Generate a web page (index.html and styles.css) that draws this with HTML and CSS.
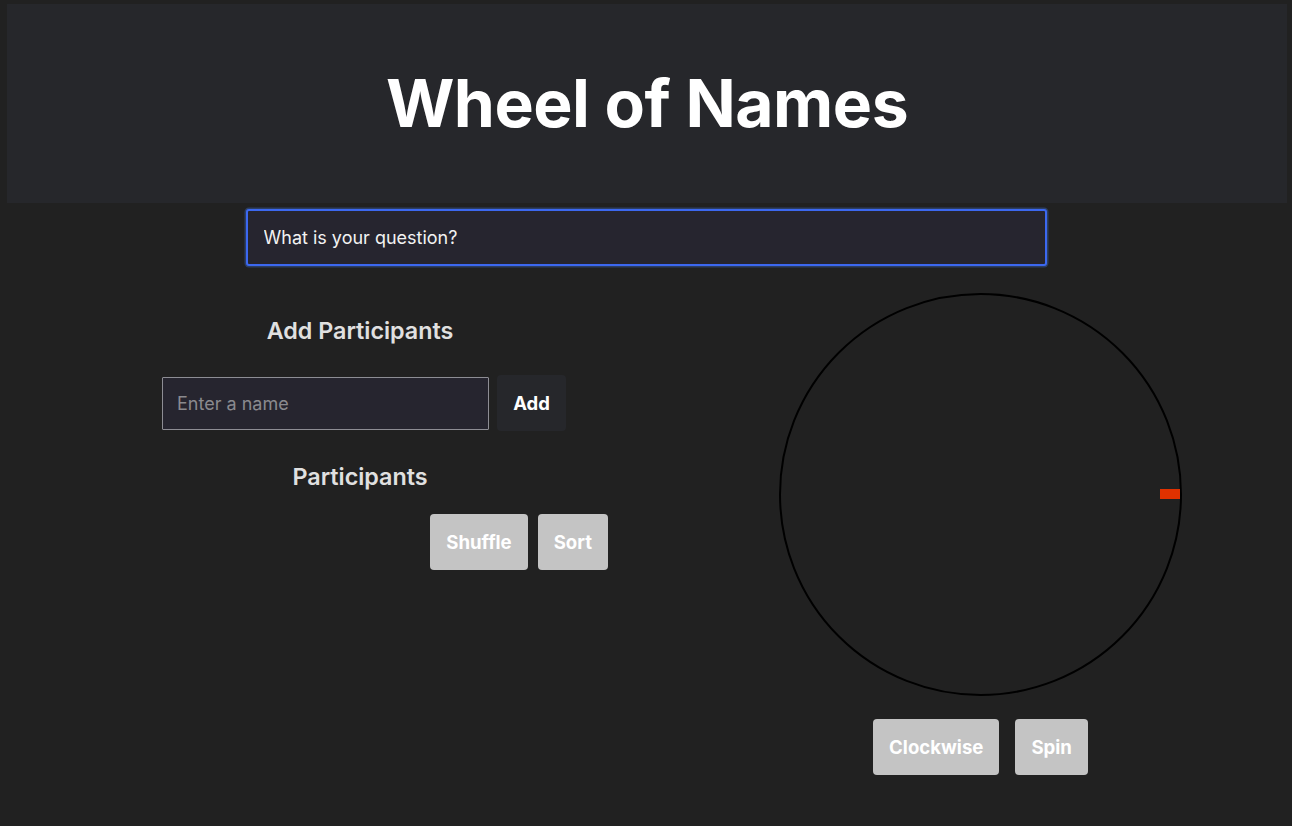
FILE: index.html
```html
<!DOCTYPE html>
<html lang="en">
<head>
<meta charset="utf-8">
<title>Wheel of Names</title>
<link rel="stylesheet" href="styles.css">
</head>
<body>
<header class="header">
  <h1 class="title">Wheel of Names</h1>
</header>
<div class="question-row">
  <input class="question" type="text" value="What is your question?">
</div>
<main class="main">
  <section class="left">
    <h2 class="heading">Add Participants</h2>
    <div class="add-row">
      <input class="name-input" type="text" placeholder="Enter a name">
      <button class="btn-add">Add</button>
    </div>
    <h2 class="heading heading-2">Participants</h2>
    <div class="list-actions">
      <button class="btn-grey">Shuffle</button>
      <button class="btn-grey">Sort</button>
    </div>
  </section>
  <section class="right">
    <div class="wheel">
      <div class="marker"></div>
    </div>
    <div class="wheel-actions">
      <button class="btn-grey">Clockwise</button>
      <button class="btn-grey">Spin</button>
    </div>
  </section>
</main>
</body>
</html>
```
FILE: styles.css
```css
html, body {
  margin: 0;
  padding: 0;
  background: #212121;
  font-family: Inter, "Noto Sans", sans-serif;
  color: #e6e6e6;
}
body {
  padding: 4px 5px 0 7px;
  min-height: 822px;
}
.header {
  height: 199px;
  background: #26272b;
  display: flex;
  align-items: center;
  justify-content: center;
}
.title {
  margin: 0;
  font-size: 66px;
  font-weight: 700;
  color: #ffffff;
  letter-spacing: -0.5px;
  line-height: 1;
  padding-bottom: 2px;
}
.question-row {
  display: flex;
  justify-content: center;
  padding-top: 6px;
  padding-right: 2px;
}
.question {
  box-sizing: border-box;
  width: 801px;
  height: 57px;
  background: #26252f;
  border: 2px solid #3c68f0;
  border-radius: 3px;
  box-shadow: 0 0 0 1.5px #2c3e62;
  outline: none;
  color: #f2f2f2;
  font-family: Inter, "Noto Sans", sans-serif;
  font-size: 18px;
  padding: 0 15px 0 16px;
}
.main {
  display: flex;
  padding-left: 105px;
  padding-top: 27px;
}
.left {
  width: 496px;
  display: flex;
  flex-direction: column;
  align-items: center;
  padding-top: 23px;
}
.heading {
  margin: 0;
  font-size: 23.3px;
  font-weight: 600;
  color: #e0e0e0;
  line-height: 30px;
}
.add-row {
  display: flex;
  gap: 8px;
  margin-top: 29px;
  margin-left: 8px;
  align-items: center;
}
.name-input {
  box-sizing: border-box;
  width: 327px;
  height: 53px;
  background: #26252f;
  border: 1px solid #8d8d94;
  border-radius: 1px;
  color: #e0e0e0;
  font-family: Inter, "Noto Sans", sans-serif;
  font-size: 18px;
  padding: 0 14px;
  outline: none;
}
.name-input::placeholder {
  color: #8a8a8e;
}
.btn-add {
  height: 56px;
  width: 69px;
  border: none;
  border-radius: 4px;
  background: #26272b;
  color: #ffffff;
  font-family: Inter, "Noto Sans", sans-serif;
  font-size: 18.5px;
  font-weight: 700;
}
.heading-2 {
  margin-top: 31px;
}
.list-actions {
  align-self: flex-end;
  display: flex;
  gap: 10px;
  margin-top: 22px;
}
.btn-grey {
  height: 56px;
  padding: 0 16px;
  border: none;
  border-radius: 4px;
  background: #c4c4c4;
  color: #ffffff;
  font-family: Inter, "Noto Sans", sans-serif;
  font-size: 18.6px;
  font-weight: 700;
}
.right {
  margin-left: 171px;
  display: flex;
  flex-direction: column;
  align-items: center;
}
.wheel {
  position: relative;
  box-sizing: border-box;
  width: 403px;
  height: 403px;
  border: 2px solid #000000;
  border-radius: 50%;
}
.marker {
  position: absolute;
  right: 0;
  top: 194px;
  width: 20px;
  height: 10px;
  background: #e03100;
}
.wheel-actions {
  display: flex;
  gap: 16px;
  margin-top: 23px;
}
```
